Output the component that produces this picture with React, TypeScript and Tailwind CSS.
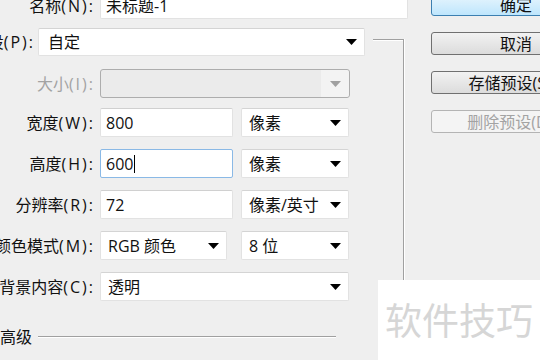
import React from "react";

const Arrow = ({ gray }: { gray?: boolean }) => (
  <svg width="11" height="6" viewBox="0 0 11 6" className="shrink-0">
    <polygon points="0,0 11,0 5.5,6" fill={gray ? "#a0a0a0" : "#000"} />
  </svg>
);

const Label = ({ cjk, latin, w, disabled }: { cjk: string; latin: string; w: string; disabled?: boolean }) => (
  <div className={`${w} flex shrink-0 justify-end`}>
    <span className={`shrink-0 whitespace-nowrap ${disabled ? "text-[#a3a3a3]" : "text-[#111]"}`}>
      {cjk}
      <span className="tracking-[2px] -mr-[2px]">{latin}</span>
    </span>
  </div>
);

const Select = ({ w, text, pl }: { w: string; text: string; pl: string }) => (
  <div
    className={`${w} h-full shrink-0 flex items-center justify-between ${pl} pr-[7px] bg-white rounded-[2px] border border-[#e2e2e2] border-t-[#d4d4d4]`}
  >
    <span className="whitespace-nowrap text-[#111]">{text}</span>
    <Arrow />
  </div>
);

const Input = ({ w, text, focused }: { w: string; text: string; focused?: boolean }) => (
  <div
    className={`${w} h-full shrink-0 flex items-center pl-[5px] bg-white rounded-[2px] border ${
      focused ? "border-[#8ab9e6]" : "border-[#e2e2e2] border-t-[#d0d0d0]"
    }`}
  >
    <span className="whitespace-nowrap text-[#111]">{text}</span>
    {focused && <span className="w-px h-[18px] bg-black ml-[1px]" />}
  </div>
);

const Button = ({ text, primary, disabled }: { text: string; primary?: boolean; disabled?: boolean }) => (
  <div
    className={`w-[170px] h-[23px] shrink-0 flex items-center justify-center rounded-[3px] border whitespace-nowrap ${
      primary
        ? "border-[#3c7fb1] bg-gradient-to-b from-[#eaf6fd] to-[#bee6fd] text-[#111]"
        : disabled
        ? "border-[#b4b4b4] bg-[#f4f4f4] text-[#a3a3a3]"
        : "border-[#707070] bg-gradient-to-b from-[#f2f2f2] to-[#dcdcdc] text-[#111]"
    }`}
  >
    {text}
  </div>
);

export default function App() {
  return (
    <div className="relative w-[540px] h-[360px] overflow-hidden bg-[#efefef] font-['Open_Sans','Noto_Sans_CJK_SC',sans-serif] text-[16px] leading-none">
      <div className="flex">
        {/* left column */}
        <div className="w-[431px] shrink-0 flex flex-col">
          {/* name row */}
          <div className="flex items-center gap-[7px] h-[27px] -mt-[8px]">
            <Label cjk="名称" latin="(N):" w="w-[93px]" />
            <Input w="w-[308px]" text="未标题-1" />
          </div>

          {/* group */}
          <div className="flex mt-[9px]">
            <div className="w-[403px] shrink-0 flex flex-col">
              {/* preset row */}
              <div className="flex items-center h-[28px]">
                <Label cjk="预设" latin="(P):" w="w-[33px]" />
                <div className="ml-[5px] h-full">
                  <Select w="w-[327px]" text="自定" pl="pl-[9px]" />
                </div>
                <div className="ml-[8px] flex-1 self-start mt-[11px] flex flex-col">
                  <div className="h-px bg-[#a0a0a0]" />
                  <div className="h-px bg-white" />
                </div>
              </div>

              {/* size row */}
              <div className="flex items-center gap-[7px] h-[29px] mt-[13px]">
                <Label cjk="大小" latin="(I):" w="w-[93px]" disabled />
                <div className="w-[250px] h-full flex items-center justify-end rounded-[3px] border border-[#adadad] bg-[#ebebeb]">
                  <div className="h-full w-[28px] flex items-center justify-center bg-[#f3f3f3] rounded-r-[3px]">
                    <Arrow gray />
                  </div>
                </div>
              </div>

              {/* width row */}
              <div className="flex items-center h-[29px] mt-[10px]">
                <Label cjk="宽度" latin="(W):" w="w-[93px]" />
                <div className="ml-[7px] h-full">
                  <Input w="w-[133px]" text="800" />
                </div>
                <div className="ml-[8px] h-full">
                  <Select w="w-[108px]" text="像素" pl="pl-[7px]" />
                </div>
              </div>

              {/* height row */}
              <div className="flex items-center h-[29px] mt-[12px]">
                <Label cjk="高度" latin="(H):" w="w-[93px]" />
                <div className="ml-[7px] h-full">
                  <Input w="w-[133px]" text="600" focused />
                </div>
                <div className="ml-[8px] h-full">
                  <Select w="w-[108px]" text="像素" pl="pl-[7px]" />
                </div>
              </div>

              {/* resolution row */}
              <div className="flex items-center h-[29px] mt-[12px]">
                <Label cjk="分辨率" latin="(R):" w="w-[93px]" />
                <div className="ml-[7px] h-full">
                  <Input w="w-[133px]" text="72" />
                </div>
                <div className="ml-[8px] h-full">
                  <Select w="w-[108px]" text="像素/英寸" pl="pl-[7px]" />
                </div>
              </div>

              {/* color mode row */}
              <div className="flex items-center h-[29px] mt-[12px]">
                <Label cjk="颜色模式" latin="(M):" w="w-[93px]" />
                <div className="ml-[7px] h-full">
                  <Select w="w-[127px]" text="RGB 颜色" pl="pl-[7px]" />
                </div>
                <div className="ml-[14px] h-full">
                  <Select w="w-[108px]" text="8 位" pl="pl-[7px]" />
                </div>
              </div>

              {/* background row */}
              <div className="flex items-center h-[29px] mt-[12px]">
                <Label cjk="背景内容" latin="(C):" w="w-[93px]" />
                <div className="ml-[7px] h-full">
                  <Select w="w-[249px]" text="透明" pl="pl-[7px]" />
                </div>
              </div>

              {/* advanced row */}
              <div className="flex items-center h-[20px] mt-[26px]">
                <span className="w-[32px] shrink-0 whitespace-nowrap text-[#111]">高级</span>
                <div className="ml-[6px] w-[298px] flex flex-col">
                  <div className="h-px bg-[#a0a0a0]" />
                  <div className="h-px bg-white" />
                </div>
              </div>
            </div>

            {/* vertical group line */}
            <div className="mt-[11px] flex self-stretch h-[400px]">
              <div className="w-px bg-[#a0a0a0]" />
              <div className="w-px bg-white" />
            </div>
          </div>
        </div>

        {/* right column: buttons */}
        <div className="flex flex-col gap-[16px] -mt-[7px]">
          <Button text="确定" primary />
          <Button text="取消" />
          <Button text="存储预设(S)..." />
          <Button text="删除预设(D)..." disabled />
        </div>
      </div>

      {/* watermark overlay */}
      <div className="absolute left-[378px] top-[280px] w-[162px] h-[80px] bg-white flex items-center pl-[7px]">
        <span className="whitespace-nowrap text-[37px] leading-none text-[#d6d6d6]">软件技巧</span>
      </div>
    </div>
  );
}
